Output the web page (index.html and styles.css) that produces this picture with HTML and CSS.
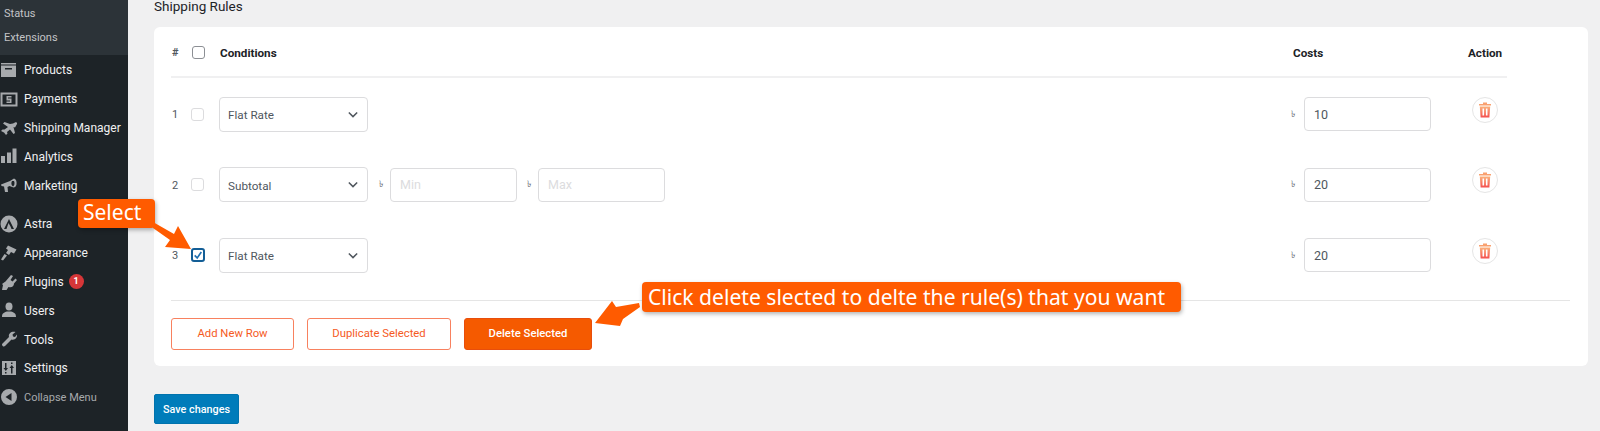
FILE: index.html
```html
<!DOCTYPE html>
<html lang="en">
<head>
<meta charset="utf-8">
<title>Shipping Rules</title>
<link rel="stylesheet" href="styles.css">
</head>
<body>
<svg class="defs" width="0" height="0"><defs><linearGradient id="tg" x1="0" y1="0" x2="0" y2="1"><stop offset="0" stop-color="#fbb27c"/><stop offset="1" stop-color="#f4504f"/></linearGradient></defs></svg>
<div class="page">
  <nav class="sidebar">
    <div class="submenu">
      <a class="sub-item">Status</a>
      <a class="sub-item">Extensions</a>
    </div>
    <a class="menu-item"><svg class="mi" viewBox="0 0 18 18"><path d="M1 2h15v1.500H1zM1 4.500h15V16H1zM5 7v1.500h7V7z" fill-rule="evenodd"/></svg><span>Products</span></a>
    <a class="menu-item"><svg class="mi" viewBox="0 0 18 18"><path d="M0.500 2.500h17v14h-17zM2.500 4.500v10h13v-10z" fill-rule="evenodd"/><path d="M6.500 6h5v1.500H8v1h3.500V13h-5v-1.500H10v-1H6.500z"/></svg><span>Payments</span></a>
    <a class="menu-item"><svg class="mi" viewBox="0 0 18 18"><path d="M13 4.500L15 3.500c1-.5 2.500 0 2 1.500l-2 3.500-1.500-.5L15 14l-1.500 1-3.500-4.500L7 13l.5 1.500L6 16l-2-2.500L1 12l1.500-1.500h2L8 8 3 4.500 4.500 3l5.500 2z"/></svg><span>Shipping Manager</span></a>
    <a class="menu-item"><svg class="mi" viewBox="0 0 18 18"><path d="M1 9h4v7H1zM7 5.500h4V16H7zM12.500 1.500h4V16h-4z"/></svg><span>Analytics</span></a>
    <a class="menu-item"><svg class="mi" viewBox="0 0 18 18"><path d="M1 8.500L10 5l4-2.500c2 .5 3 3 2.500 6-.5 2-1.500 3-3 3l-4-1.500-2 1 .5 5H5l-1-5.500-2.500-.5z M12 5c-1 2-1 4 1 5.500 1.500-1 2-3.500 1-5.500z" fill-rule="evenodd"/></svg><span>Marketing</span></a>
    <a class="menu-item menu-item-sep"><svg class="mi mi-astra" viewBox="0 0 18 18"><path d="M9 .5a8.500 8.500 0 1 0 0 17 8.500 8.500 0 0 0 0-17zm0 3.500L14 14h-2.500l-1-2.500L8.500 8 6.500 14H4z" fill-rule="evenodd"/></svg><span>Astra</span></a>
    <a class="menu-item"><svg class="mi" viewBox="0 0 18 18"><path d="M8 1.500l8.500 4-2.500 4-3-1.500-2 3-3-2 2-3-2-1.500zM4.500 10l2.500 1.500-4 5-2-1z"/></svg><span>Appearance</span></a>
    <a class="menu-item"><svg class="mi" viewBox="0 0 18 18"><path d="M11 2l2 1-2.500 4 2 1.500 3-3 1.500 1.500-3 3.500c0 3-2.500 4.500-5.500 3.500l-2 3H2l1-5-1-1 3.500-2.500z"/></svg><span>Plugins</span><b class="badge">1</b></a>
    <a class="menu-item"><svg class="mi" viewBox="0 0 18 18"><ellipse cx="9" cy="5.500" rx="3.500" ry="4"/><path d="M2 16c0-4 2-4.500 5-5.500h4c3 1 5 1.500 5 5.500z"/></svg><span>Users</span></a>
    <a class="menu-item"><svg class="mi" viewBox="0 0 18 18"><path d="M15.500 2l-3 2.500.5 2 2 .5L17 4.500c.5 3-2 6-5.500 5L5 16c-1.500 1.500-4-1-2.500-2.500L9 7c-1-4 3-6 6.500-5z"/></svg><span>Tools</span></a>
    <a class="menu-item"><svg class="mi" viewBox="0 0 18 18"><path d="M2 2h14v14H2zM5 4v5H3.500l2.300 3 2.200-3H6.500V4zM5 13v1.500h1.500V13zM11 14.500V9H9.500l2.300-3L14 9h-1.500v5.500zM11 3.500V5h1.500V3.500z" fill-rule="evenodd"/></svg><span>Settings</span></a>
    <a class="menu-item menu-collapse"><svg class="mi" viewBox="0 0 18 18"><path d="M9 1a8 8 0 1 0 0 16A8 8 0 0 0 9 1zm2.500 4v8L5.500 9z" fill-rule="evenodd"/></svg><span>Collapse Menu</span></a>
  </nav>

  <main class="main">
    <h2 class="title">Shipping Rules</h2>
    <section class="card">
      <div class="head-row">
        <span class="c-num">#</span>
        <span class="c-check"><i class="box box-head"></i></span>
        <span class="c-cond c-cond-head">Conditions</span>
        <span class="c-cost">Costs</span>
        <span class="c-act">Action</span>
      </div>

      <div class="row">
        <span class="c-num">1</span>
        <span class="c-check"><i class="box"></i></span>
        <div class="c-cond">
          <div class="select"><span>Flat Rate</span><svg class="chev" viewBox="0 0 12 8"><path d="M1 1.500l5 5 5-5"/></svg></div>
        </div>
        <div class="c-cost"><span class="cur">৳</span><div class="input">10</div></div>
        <div class="c-act"><button class="trash"><svg viewBox="0 0 12 16"><path fill="#f9a06e" d="M4 0.500h4v1.500h4v1.500H0V2h4z"/><path fill="url(#tg)" d="M.8 4.500h10.400l-.8 11H1.600zM3.500 6.500v7h1.600v-7zM6.900 6.500v7h1.600v-7z" fill-rule="evenodd"/></svg></button></div>
      </div>

      <div class="row">
        <span class="c-num">2</span>
        <span class="c-check"><i class="box"></i></span>
        <div class="c-cond">
          <div class="select"><span>Subtotal</span><svg class="chev" viewBox="0 0 12 8"><path d="M1 1.500l5 5 5-5"/></svg></div>
          <span class="cur cur-mid">৳</span><div class="input input-ph">Min</div>
          <span class="cur cur-mid">৳</span><div class="input input-ph">Max</div>
        </div>
        <div class="c-cost"><span class="cur">৳</span><div class="input">20</div></div>
        <div class="c-act"><button class="trash"><svg viewBox="0 0 12 16"><path fill="#f9a06e" d="M4 0.500h4v1.500h4v1.500H0V2h4z"/><path fill="url(#tg)" d="M.8 4.500h10.400l-.8 11H1.600zM3.500 6.500v7h1.600v-7zM6.900 6.500v7h1.600v-7z" fill-rule="evenodd"/></svg></button></div>
      </div>

      <div class="row">
        <span class="c-num">3</span>
        <span class="c-check"><i class="box box-on"><svg viewBox="0 0 12 12"><path d="M2 6.500l3 3 5-7"/></svg></i></span>
        <div class="c-cond">
          <div class="select"><span>Flat Rate</span><svg class="chev" viewBox="0 0 12 8"><path d="M1 1.500l5 5 5-5"/></svg></div>
        </div>
        <div class="c-cost"><span class="cur">৳</span><div class="input">20</div></div>
        <div class="c-act"><button class="trash"><svg viewBox="0 0 12 16"><path fill="#f9a06e" d="M4 0.500h4v1.500h4v1.500H0V2h4z"/><path fill="url(#tg)" d="M.8 4.500h10.400l-.8 11H1.600zM3.500 6.500v7h1.600v-7zM6.900 6.500v7h1.600v-7z" fill-rule="evenodd"/></svg></button></div>
      </div>

      <div class="actions">
        <button class="btn btn-add">Add New Row</button>
        <button class="btn btn-dup">Duplicate Selected</button>
        <button class="btn btn-del">Delete Selected</button>
      </div>
    </section>
    <button class="save">Save changes</button>
  </main>
</div>

<div class="note note-select">Select</div>
<svg class="arrow arrow-select" viewBox="0 0 55 40"><path d="M2 2L23 14 27 6 40 29 14 27 19 20 2 8z"/></svg>
<div class="note note-delete">Click delete slected to delte the rule(s) that you want</div>
<svg class="arrow arrow-delete" viewBox="0 0 55 40"><path d="M7 26L24 4 28 10 51 6 52 10 35 22 32 29z"/></svg>
</body>
</html>
```

FILE: styles.css
```css
* { box-sizing: border-box; }
html, body { margin: 0; height: 431px; overflow: hidden; }
body {
  background: #f0f0f1;
  font-family: Roboto, "Noto Sans", sans-serif;
  font-size: 12px;
  color: #1d2327;
  position: relative;
}
.defs { position: absolute; }
.page { display: flex; height: 431px; }

/* sidebar */
.sidebar { width: 128px; flex: none; background: #1d2327; color: #f0f0f1; }
.submenu {
  height: 55px;
  background: #2c3338;
  padding-top: 2px;
  margin-bottom: 1px;
}
.sub-item { display: block; height: 24px; line-height: 24px; padding-left: 4px; font-size: 11px; color: #c3c4c7; }
.menu-item {
  display: flex;
  align-items: center;
  height: 28.8px;
  padding-left: 24px;
  position: relative;
  font-size: 12px;
  white-space: nowrap;
}
.menu-item-sep { margin-top: 10px; }
.menu-collapse { color: #a7aaad; font-size: 11px; }
.mi { position: absolute; left: 0; top: 5px; width: 18px; height: 18px; fill: #a7aaad; }
.badge {
  width: 15px; height: 15px; margin-left: 5px;
  border-radius: 50%;
  background: #d63638; color: #fff;
  font-size: 9px; font-weight: 700; line-height: 15px; text-align: center;
}

/* main */
.main { flex: 1; padding-left: 26px; padding-right: 12px; min-width: 0; }
.title { margin: 0; height: 13px; font-size: 13.500px; line-height: 13px; font-weight: 400; color: #1d2327; }
.card {
  margin-top: 14px;
  height: 339px;
  background: #fff;
  border-radius: 6px;
  padding: 0 17px;
}
.head-row, .row { display: grid; grid-template-columns: 21px 27px 1074px 175px 39px; width: 1336px; }
.head-row {
  height: 51px;
  padding-top: 2px;
  align-items: center;
  border-bottom: 2px solid #f0f0f1;
  font-weight: 700;
  font-size: 11.700px;
  color: #1d2327;
}
.c-cond-head { padding-left: 1px; }
.head-row .c-num { color: #50575e; padding-left: 1px; font-size: 11px; }
.row { height: 70.5px; align-items: center; font-size: 11.700px; color: #50575e; }
.row .c-num { padding-left: 1px; padding-top: 1px; font-size: 11px; }
.row:nth-of-type(2) { margin-top: 1px; }
.c-cond { display: flex; align-items: center; }
.c-cost { display: flex; align-items: center; }
.c-act { display: flex; }
.box {
  display: block; width: 13px; height: 13px;
  margin-left: -1px;
  border: 1.500px solid #dcdcde;
  border-radius: 3px;
  background: #fff;
}
.box-head { margin-left: 0; border-color: #8c8f94; }
.box-on { width: 14px; height: 14px; border: 2px solid #135e96; padding: 0; }
.box-on svg { display: block; width: 100%; height: 100%; fill: none; stroke: #2271b1; stroke-width: 2; }
.select {
  width: 149px; height: 35px;
  padding: 0 8px;
  display: flex; align-items: center; justify-content: space-between;
  border: 1px solid #dcdcde;
  border-radius: 4px;
  background: #fff;
}
.select span { position: relative; top: 1px; }
.chev { width: 10px; height: 7px; margin-right: 1px; fill: none; stroke: #50575e; stroke-width: 1.800; }
.input {
  width: 127px; height: 34px;
  padding: 0 9px;
  display: flex; align-items: center;
  border: 1px solid #dcdcde;
  border-radius: 4px;
  background: #fff;
  font-size: 12.500px;
}
.input-ph { color: #dcdcde; }
.cur { width: 13px; margin-left: -2px; font-size: 9px; color: #646970; flex: none; }
.cur-mid { width: 11px; margin-left: 11px; }
.cur-mid + .input + .cur-mid { margin-left: 10px; }
.trash {
  width: 26px; height: 26px; padding: 0;
  margin-left: 4px; margin-bottom: 9px;
  display: flex; align-items: center; justify-content: center;
  background: #fff;
  border: 1px solid #e5e5e5;
  border-radius: 50%;
}
.trash svg { width: 12px; height: 16px; }

.actions {
  display: flex; align-items: flex-start;
  margin-top: 9px;
  padding-top: 17px;
  border-top: 1px solid #e5e5e5;
  height: 50px;
  width: 1399px;
}
.btn {
  height: 32px;
  border-radius: 3px;
  font-family: inherit;
  font-size: 11.300px;
  font-weight: 400;
  padding: 0;
  background: #fff;
  color: #f55a1e;
  border: 1px solid #f8815f;
}
.btn-add { width: 123px; margin-right: 13px; }
.btn-dup { width: 144px; margin-right: 13px; }
.btn-del { width: 128px; background: #f55a00; border-color: #e84e0c; color: #fff; font-weight: 500; }
.save {
  display: block;
  margin-top: 28px;
  width: 85px; height: 30px;
  padding: 0;
  font-family: inherit;
  font-size: 10.800px;
  font-weight: 500;
  color: #fff;
  background: #007cba;
  border: 1px solid #0073ad;
  border-radius: 2px;
}

/* annotations */
.note {
  position: absolute;
  background: #ff5b00;
  color: #fff;
  border-radius: 4px;
  box-shadow: 1px 2px 4px rgba(0,0,0,.3);
  font-family: "Noto Sans", "Open Sans", sans-serif;
  white-space: nowrap;
}
.note-select { left: 78px; top: 199px; width: 77px; height: 29px; padding-left: 5px; font-size: 21px; line-height: 27px; }
.note-delete { left: 642px; top: 282px; width: 539px; height: 30px; padding-left: 6px; font-size: 21.100px; line-height: 29px; }
.arrow { position: absolute; width: 55px; height: 40px; fill: #ff5b00; }
.arrow-select { left: 151px; top: 220px; }
.arrow-delete { left: 588px; top: 297px; }
```
